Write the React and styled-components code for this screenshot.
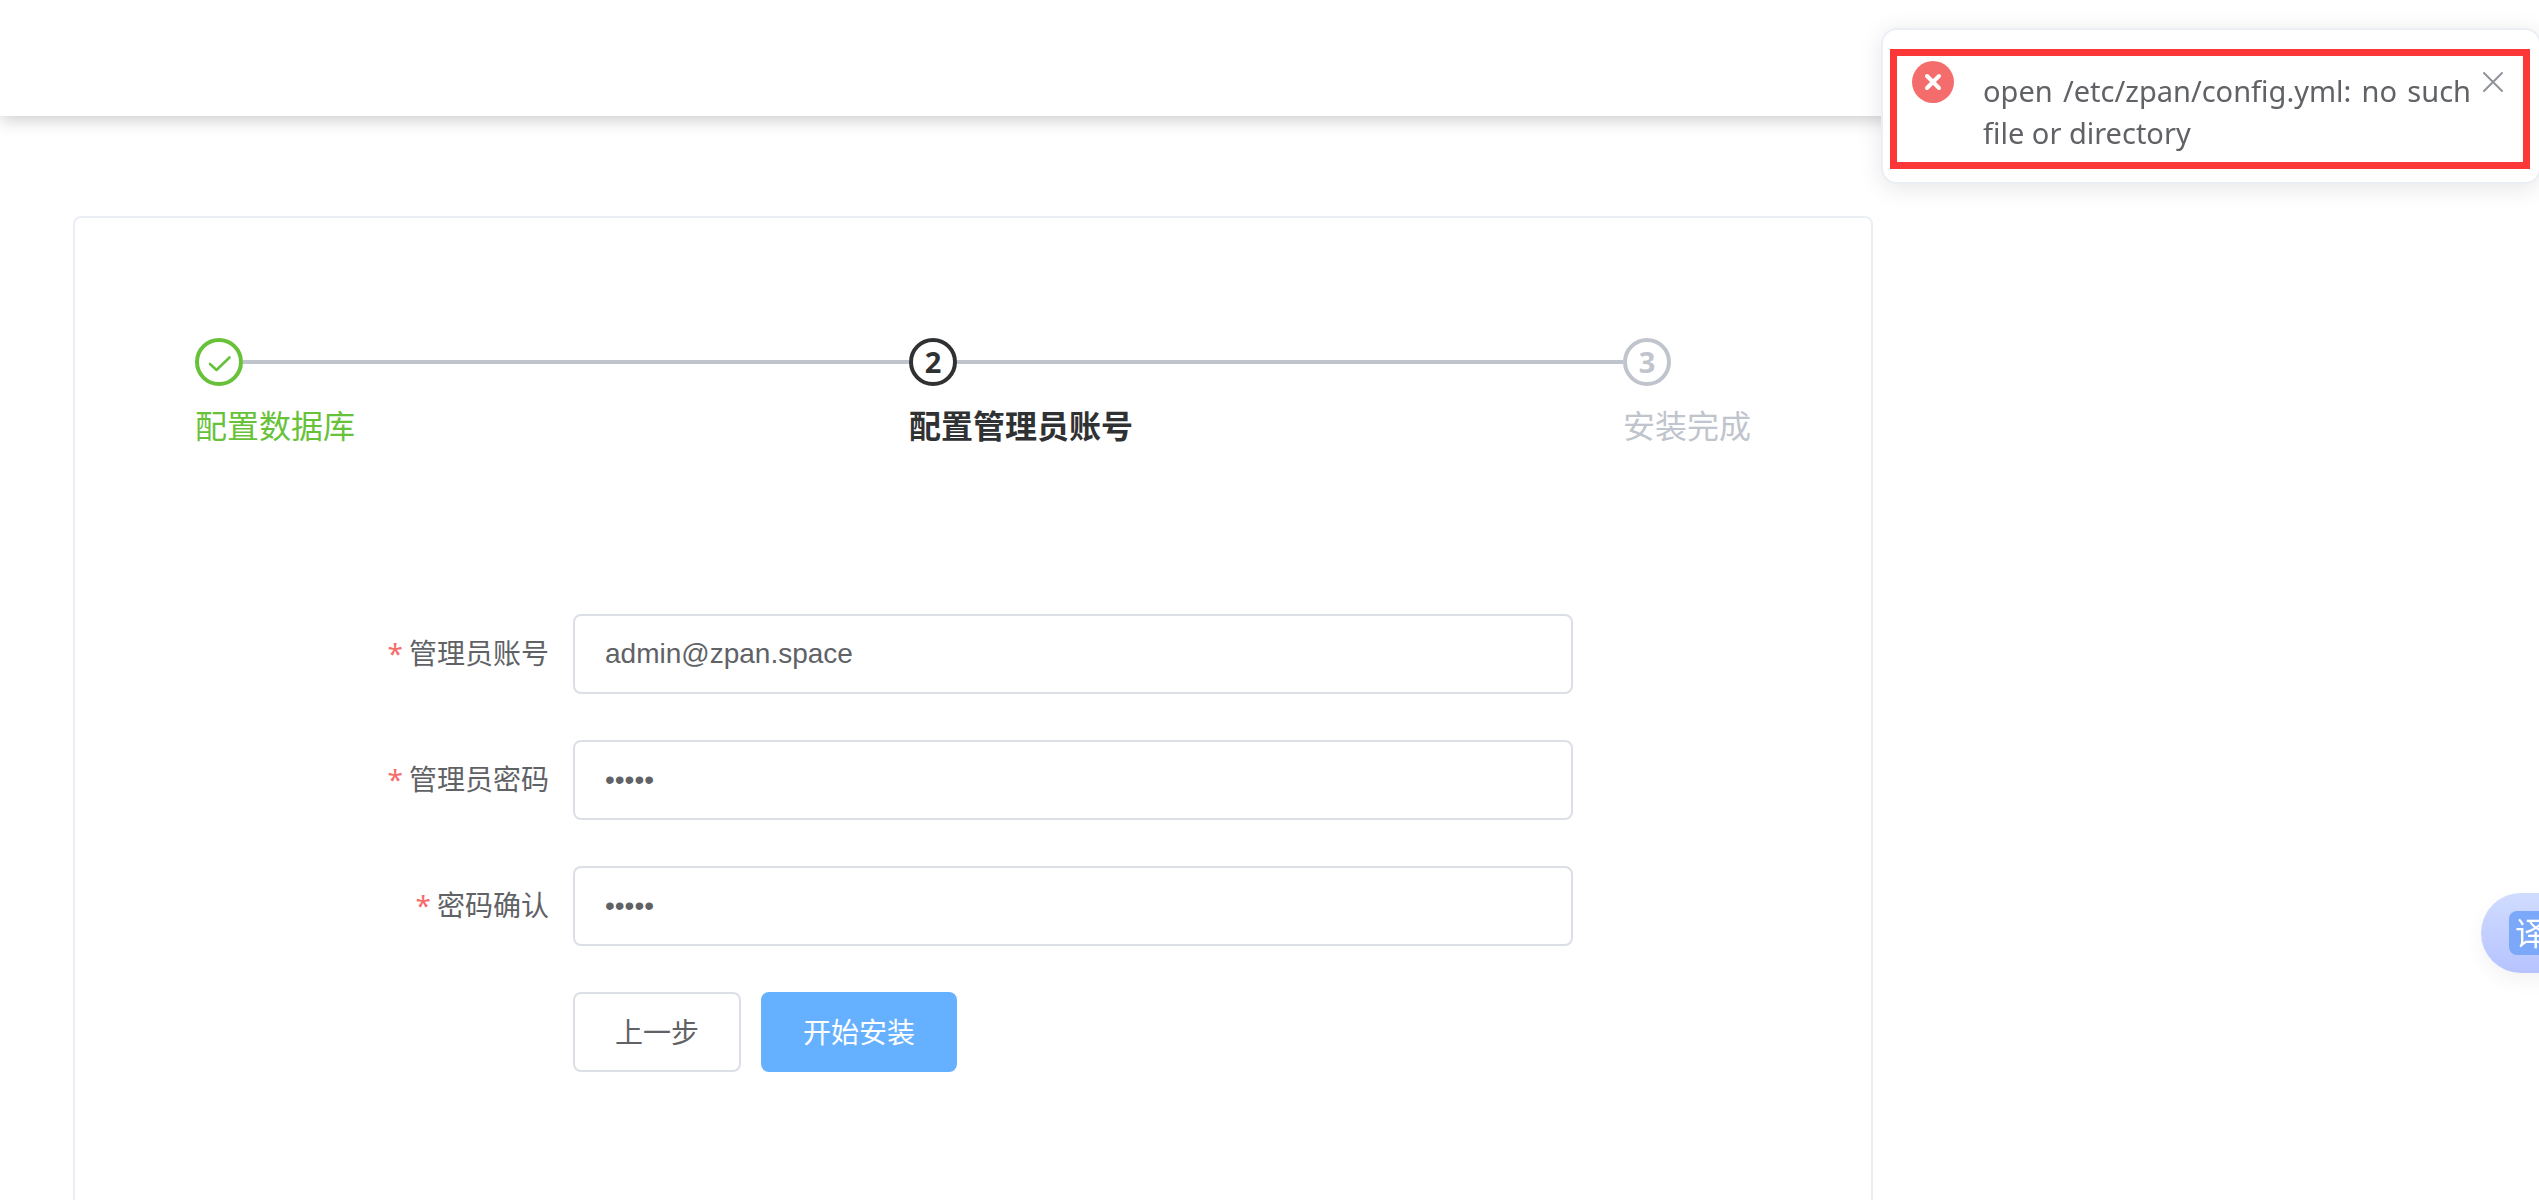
import React, { useState } from 'react';
import styled, { createGlobalStyle } from 'styled-components';

const GlobalStyle = createGlobalStyle`
	* {
		box-sizing: border-box;
	}

	body {
		margin: 0;
		background-color: #ffffff;
		color: #606266;
		font-family: "Noto Sans", "Noto Sans CJK SC", sans-serif;
		font-size: 28px;
	}
`;

const Page = styled.div`
	height: 100vh;
	overflow: hidden;
`;

const Header = styled.header`
	height: 116px;
	background-color: #ffffff;
	box-shadow: 0 4px 16px rgba(0, 0, 0, 0.2);
`;

const Card = styled.main`
	max-width: 1800px;
	margin: 100px 73px 0;
	padding: 120px 120px 160px;
	border: 2px solid #ebeef5;
	border-radius: 8px;
`;

const Steps = styled.ol`
	display: flex;
	margin: 0 0 148px;
	padding: 0;
	list-style: none;
`;

const stepColors = {
	success: '#67c23a',
	process: '#303133',
	wait: '#c0c4cc'
};

const Step = styled.li`
	flex: ${({ $last }) => ($last ? 'none' : '1')};
	color: ${({ $status }) => stepColors[$status]};
	font-weight: ${({ $status }) => ($status === 'process' ? 700 : 400)};
`;

const StepHead = styled.div`
	display: flex;
	align-items: center;
`;

const StepIcon = styled.div`
	display: flex;
	align-items: center;
	justify-content: center;
	width: 48px;
	height: 48px;
	border: 4px solid currentColor;
	border-radius: 50%;
	font-size: 29px;
	font-weight: 700;
	line-height: 28px;
`;

const StepLine = styled.div`
	flex: 1;
	height: 4px;
	background-color: #c0c4cc;
`;

const StepTitle = styled.div`
	font-size: 32px;
	line-height: 80px;
	white-space: nowrap;
`;

const Form = styled.form`
	display: flex;
	flex-direction: column;
	gap: 46px;
	max-width: 1200px;
	margin: 0 auto;
`;

const FormItem = styled.div`
	display: flex;
	height: 80px;
`;

const Label = styled.label`
	width: 200px;
	padding-right: 24px;
	line-height: 78px;
	text-align: right;
`;

const Required = styled.span`
	margin-right: 6px;
	color: #f56c6c;
`;

const Input = styled.input`
	flex: 1;
	min-width: 0;
	padding: 0 30px;
	border: 2px solid #dcdfe6;
	border-radius: 8px;
	outline: none;
	background-color: #ffffff;
	color: #606266;
	font-family: "Liberation Sans", Arial, sans-serif;
	font-size: 28px;
`;

const Actions = styled.div`
	display: flex;
	gap: 20px;
	padding-left: 200px;
`;

const Button = styled.button`
	height: 80px;
	padding: 0 40px 2px;
	border: 2px solid ${({ $primary }) => ($primary ? '#66b1ff' : '#dcdfe6')};
	border-radius: 8px;
	background-color: ${({ $primary }) => ($primary ? '#66b1ff' : '#ffffff')};
	color: ${({ $primary }) => ($primary ? '#ffffff' : '#606266')};
	font-family: inherit;
	font-size: 28px;
	cursor: pointer;
`;

const Notification = styled.div`
	position: fixed;
	top: 28px;
	right: -2px;
	display: flex;
	width: 660px;
	padding: 28px 52px 28px 26px;
	border: 2px solid #ebeef5;
	border-radius: 16px;
	background-color: #ffffff;
	box-shadow: 0 4px 24px rgba(0, 0, 0, 0.1);
`;

const ErrorIcon = styled.svg`
	flex: none;
	width: 48px;
	height: 48px;
`;

const Message = styled.p`
	flex: 1;
	margin: 12px 16px 0 26px;
	font-size: 29px;
	line-height: 42px;
	text-align: justify;
`;

const CloseButton = styled.button`
	position: absolute;
	top: 36px;
	right: 30px;
	width: 32px;
	height: 32px;
	padding: 0;
	border: none;
	background: none;
	color: #909399;
	cursor: pointer;

	svg {
		display: block;
	}
`;

const Highlight = styled.div`
	position: absolute;
	top: 19px;
	right: 9px;
	bottom: 13px;
	left: 7px;
	border: 7px solid #fc3737;
	pointer-events: none;
`;

const TranslateButton = styled.button`
	position: fixed;
	top: 893px;
	right: -42px;
	display: flex;
	align-items: center;
	width: 100px;
	height: 80px;
	padding: 0 28px;
	border: none;
	border-radius: 40px;
	background: linear-gradient(#d0dcff, #b6c3ff);
	box-shadow: 0 8px 20px rgba(0, 0, 0, 0.05);
	cursor: pointer;
`;

const TranslateIcon = styled.span`
	flex: none;
	width: 44px;
	height: 44px;
	border-radius: 8px;
	background-color: #7ba8f8;
	color: #ffffff;
	font-family: "Noto Sans CJK SC", sans-serif;
	font-size: 32px;
	line-height: 40px;
	text-align: center;
`;

const steps = [
	{ title: '配置数据库', status: 'success' },
	{ title: '配置管理员账号', status: 'process' },
	{ title: '安装完成', status: 'wait' }
];

const fields = [
	{ name: 'email', label: '管理员账号', type: 'text' },
	{ name: 'password', label: '管理员密码', type: 'password' },
	{ name: 'confirm', label: '密码确认', type: 'password' }
];

const CheckIcon = () => (
	<svg width="28" height="28" viewBox="0 0 28 28" fill="none" stroke="currentColor" strokeWidth="2.6" strokeLinecap="round" strokeLinejoin="round">
		<path d="M5 16l6.5 6L24.5 9.5" />
	</svg>
);

const App = () => {
	const [values, setValues] = useState({ email: 'admin@zpan.space', password: 'admin', confirm: 'admin' });
	const [showError, setShowError] = useState(true);

	const handleChange = (e) => setValues({ ...values, [e.target.name]: e.target.value });

	return (
		<Page>
			<GlobalStyle />
			<Header />
			<Card>
				<Steps>
					{steps.map(({ title, status }, index) => {
						const last = index === steps.length - 1;
						return (
							<Step key={title} $status={status} $last={last}>
								<StepHead>
									<StepIcon>{status === 'success' ? <CheckIcon /> : index + 1}</StepIcon>
									{!last && <StepLine />}
								</StepHead>
								<StepTitle>{title}</StepTitle>
							</Step>
						);
					})}
				</Steps>
				<Form onSubmit={(e) => e.preventDefault()}>
					{fields.map(({ name, label, type }) => (
						<FormItem key={name}>
							<Label htmlFor={name}>
								<Required>*</Required>
								{label}
							</Label>
							<Input id={name} name={name} type={type} value={values[name]} onChange={handleChange} />
						</FormItem>
					))}
					<Actions>
						<Button type="button">上一步</Button>
						<Button type="submit" $primary>开始安装</Button>
					</Actions>
				</Form>
			</Card>
			{showError && (
				<Notification role="alert">
					<ErrorIcon viewBox="0 0 48 48">
						<circle cx="24" cy="24" r="21" fill="#f56c6c" />
						<path d="M18 18l12 12M30 18l-12 12" stroke="#ffffff" strokeWidth="4" strokeLinecap="round" />
					</ErrorIcon>
					<Message>open /etc/zpan/config.yml: no such file or directory</Message>
					<CloseButton type="button" aria-label="关闭" onClick={() => setShowError(false)}>
						<svg width="32" height="32" viewBox="0 0 32 32">
							<path d="M7 7l18 18M25 7l-18 18" stroke="currentColor" strokeWidth="2" strokeLinecap="round" />
						</svg>
					</CloseButton>
					<Highlight />
				</Notification>
			)}
			<TranslateButton type="button">
				<TranslateIcon>译</TranslateIcon>
			</TranslateButton>
		</Page>
	);
};

export default App;
